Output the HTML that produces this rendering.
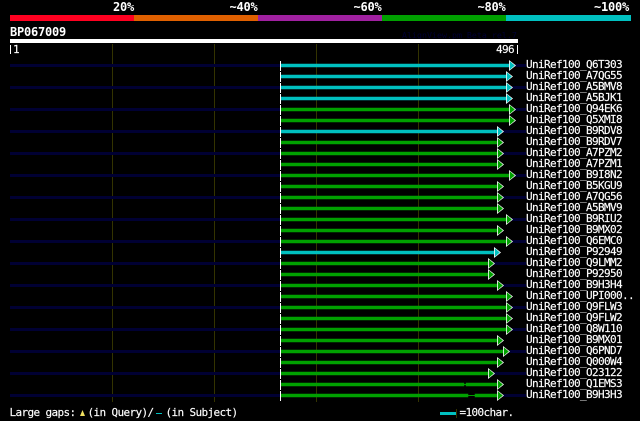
<!DOCTYPE html>
<html><head><meta charset="utf-8"><style>
html,body{margin:0;padding:0;background:#000;width:640px;height:421px;overflow:hidden}
svg{display:block}
text{font-family:"DejaVu Sans Mono","Liberation Mono",monospace;font-size:10px;fill:#fff}
.l{font-size:11px;letter-spacing:-.62px;stroke:#fff;stroke-width:.15px}
.b{font-size:12px;letter-spacing:-.22px;font-weight:bold}
.d{fill:#000033}.w{fill:#fff}
.c{fill:#00c0c0;stroke:#00c0c0;stroke-width:.5px}
.g{fill:#00a000;stroke:#00a000;stroke-width:.5px}
</style></head><body>
<svg width="640" height="421" viewBox="0 0 640 421" xmlns="http://www.w3.org/2000/svg">
<defs>
<g id="tc"><polygon points="0,-5 7,0.5 0,6" fill="#fff"/><polygon points="0.8,-3.8 5.8,0.5 0.8,4.8" fill="#00c0c0"/></g>
<g id="tg"><polygon points="0,-5 7,0.5 0,6" fill="#fff"/><polygon points="0.8,-3.8 5.8,0.5 0.8,4.8" fill="#00a000"/></g>
</defs>
<text class="b" x="113" y="11">20%</text>
<text class="b" x="229.5" y="11">~40%</text>
<text class="b" x="353.5" y="11">~60%</text>
<text class="b" x="477.5" y="11">~80%</text>
<text class="b" x="594" y="11">~100%</text>
<rect x="10" y="15" width="124" height="6" fill="#ff0020"/>
<rect x="134" y="15" width="124" height="6" fill="#e06000"/>
<rect x="258" y="15" width="124" height="6" fill="#a020a0"/>
<rect x="382" y="15" width="124" height="6" fill="#00a000"/>
<rect x="506" y="15" width="125" height="6" fill="#00c0c0"/>
<text class="b" x="10" y="36">BP067009</text>
<text x="402" y="38" style="font-size:8.3px;fill:#000033">AlignView.pm Beta rel.7</text>
<rect x="10" y="39" width="508" height="4" class="w"/>
<rect x="10" y="45" width="1" height="9" class="w"/>
<text class="l" x="13" y="53">1</text>
<text class="l" x="496" y="53">496</text>
<rect x="517" y="45" width="1" height="9" class="w"/>
<rect x="112" y="44" width="1" height="358" fill="#333300"/>
<rect x="214" y="44" width="1" height="358" fill="#333300"/>
<rect x="316" y="44" width="1" height="358" fill="#333300"/>
<rect x="418" y="44" width="1" height="358" fill="#333300"/>

<g transform="translate(0,65)"><rect x="10" y="-1" width="270" height="3" class="d"/><rect x="515" y="-1" width="11" height="3" class="d"/><rect x="281" y="-1" width="228" height="3" class="c"/><rect x="280" y="-4" width="1" height="10" class="w"/><use href="#tc" x="509"/><text class="l" x="526" y="3">UniRef100_Q6T303</text></g>
<g transform="translate(0,76)"><rect x="281" y="-1" width="225" height="3" class="c"/><rect x="280" y="-4" width="1" height="10" class="w"/><use href="#tc" x="506"/><text class="l" x="526" y="3">UniRef100_A7QG55</text></g>
<g transform="translate(0,87)"><rect x="10" y="-1" width="270" height="3" class="d"/><rect x="512" y="-1" width="14" height="3" class="d"/><rect x="281" y="-1" width="225" height="3" class="c"/><rect x="280" y="-4" width="1" height="10" class="w"/><use href="#tc" x="506"/><text class="l" x="526" y="3">UniRef100_A5BMV8</text></g>
<g transform="translate(0,98)"><rect x="281" y="-1" width="225" height="3" class="c"/><rect x="280" y="-4" width="1" height="10" class="w"/><use href="#tc" x="506"/><text class="l" x="526" y="3">UniRef100_A5BJK1</text></g>
<g transform="translate(0,109)"><rect x="10" y="-1" width="270" height="3" class="d"/><rect x="515" y="-1" width="11" height="3" class="d"/><rect x="281" y="-1" width="228" height="3" class="g"/><rect x="280" y="-4" width="1" height="10" class="w"/><use href="#tg" x="509"/><text class="l" x="526" y="3">UniRef100_Q94EK6</text></g>
<g transform="translate(0,120)"><rect x="281" y="-1" width="228" height="3" class="g"/><rect x="280" y="-4" width="1" height="10" class="w"/><use href="#tg" x="509"/><text class="l" x="526" y="3">UniRef100_Q5XMI8</text></g>
<g transform="translate(0,131)"><rect x="10" y="-1" width="270" height="3" class="d"/><rect x="503" y="-1" width="23" height="3" class="d"/><rect x="281" y="-1" width="216" height="3" class="c"/><rect x="280" y="-4" width="1" height="10" class="w"/><use href="#tc" x="497"/><text class="l" x="526" y="3">UniRef100_B9RDV8</text></g>
<g transform="translate(0,142)"><rect x="281" y="-1" width="216" height="3" class="g"/><rect x="280" y="-4" width="1" height="10" class="w"/><use href="#tg" x="497"/><text class="l" x="526" y="3">UniRef100_B9RDV7</text></g>
<g transform="translate(0,153)"><rect x="10" y="-1" width="270" height="3" class="d"/><rect x="503" y="-1" width="23" height="3" class="d"/><rect x="281" y="-1" width="216" height="3" class="g"/><rect x="280" y="-4" width="1" height="10" class="w"/><use href="#tg" x="497"/><text class="l" x="526" y="3">UniRef100_A7PZM2</text></g>
<g transform="translate(0,164)"><rect x="281" y="-1" width="216" height="3" class="g"/><rect x="280" y="-4" width="1" height="10" class="w"/><use href="#tg" x="497"/><text class="l" x="526" y="3">UniRef100_A7PZM1</text></g>
<g transform="translate(0,175)"><rect x="10" y="-1" width="270" height="3" class="d"/><rect x="515" y="-1" width="11" height="3" class="d"/><rect x="281" y="-1" width="228" height="3" class="g"/><rect x="280" y="-4" width="1" height="10" class="w"/><use href="#tg" x="509"/><text class="l" x="526" y="3">UniRef100_B9I8N2</text></g>
<g transform="translate(0,186)"><rect x="281" y="-1" width="216" height="3" class="g"/><rect x="280" y="-4" width="1" height="10" class="w"/><use href="#tg" x="497"/><text class="l" x="526" y="3">UniRef100_B5KGU9</text></g>
<g transform="translate(0,197)"><rect x="10" y="-1" width="270" height="3" class="d"/><rect x="503" y="-1" width="23" height="3" class="d"/><rect x="281" y="-1" width="216" height="3" class="g"/><rect x="280" y="-4" width="1" height="10" class="w"/><use href="#tg" x="497"/><text class="l" x="526" y="3">UniRef100_A7QG56</text></g>
<g transform="translate(0,208)"><rect x="281" y="-1" width="216" height="3" class="g"/><rect x="280" y="-4" width="1" height="10" class="w"/><use href="#tg" x="497"/><text class="l" x="526" y="3">UniRef100_A5BMV9</text></g>
<g transform="translate(0,219)"><rect x="10" y="-1" width="270" height="3" class="d"/><rect x="512" y="-1" width="14" height="3" class="d"/><rect x="281" y="-1" width="225" height="3" class="g"/><rect x="280" y="-4" width="1" height="10" class="w"/><use href="#tg" x="506"/><text class="l" x="526" y="3">UniRef100_B9RIU2</text></g>
<g transform="translate(0,230)"><rect x="281" y="-1" width="216" height="3" class="g"/><rect x="280" y="-4" width="1" height="10" class="w"/><use href="#tg" x="497"/><text class="l" x="526" y="3">UniRef100_B9MX02</text></g>
<g transform="translate(0,241)"><rect x="10" y="-1" width="270" height="3" class="d"/><rect x="512" y="-1" width="14" height="3" class="d"/><rect x="281" y="-1" width="225" height="3" class="g"/><rect x="280" y="-4" width="1" height="10" class="w"/><use href="#tg" x="506"/><text class="l" x="526" y="3">UniRef100_Q6EMC0</text></g>
<g transform="translate(0,252)"><rect x="281" y="-1" width="213" height="3" class="c"/><rect x="280" y="-4" width="1" height="10" class="w"/><use href="#tc" x="494"/><text class="l" x="526" y="3">UniRef100_P92949</text></g>
<g transform="translate(0,263)"><rect x="10" y="-1" width="270" height="3" class="d"/><rect x="494" y="-1" width="32" height="3" class="d"/><rect x="281" y="-1" width="207" height="3" class="g"/><rect x="280" y="-4" width="1" height="10" class="w"/><use href="#tg" x="488"/><text class="l" x="526" y="3">UniRef100_Q9LMM2</text></g>
<g transform="translate(0,274)"><rect x="281" y="-1" width="207" height="3" class="g"/><rect x="280" y="-4" width="1" height="10" class="w"/><use href="#tg" x="488"/><text class="l" x="526" y="3">UniRef100_P92950</text></g>
<g transform="translate(0,285)"><rect x="10" y="-1" width="270" height="3" class="d"/><rect x="503" y="-1" width="23" height="3" class="d"/><rect x="281" y="-1" width="216" height="3" class="g"/><rect x="280" y="-4" width="1" height="10" class="w"/><use href="#tg" x="497"/><text class="l" x="526" y="3">UniRef100_B9H3H4</text></g>
<g transform="translate(0,296)"><rect x="281" y="-1" width="225" height="3" class="g"/><rect x="280" y="-4" width="1" height="10" class="w"/><use href="#tg" x="506"/><text class="l" x="526" y="3">UniRef100_UPI000..</text></g>
<g transform="translate(0,307)"><rect x="10" y="-1" width="270" height="3" class="d"/><rect x="512" y="-1" width="14" height="3" class="d"/><rect x="281" y="-1" width="225" height="3" class="g"/><rect x="280" y="-4" width="1" height="10" class="w"/><use href="#tg" x="506"/><text class="l" x="526" y="3">UniRef100_Q9FLW3</text></g>
<g transform="translate(0,318)"><rect x="281" y="-1" width="225" height="3" class="g"/><rect x="280" y="-4" width="1" height="10" class="w"/><use href="#tg" x="506"/><text class="l" x="526" y="3">UniRef100_Q9FLW2</text></g>
<g transform="translate(0,329)"><rect x="10" y="-1" width="270" height="3" class="d"/><rect x="512" y="-1" width="14" height="3" class="d"/><rect x="281" y="-1" width="225" height="3" class="g"/><rect x="280" y="-4" width="1" height="10" class="w"/><use href="#tg" x="506"/><text class="l" x="526" y="3">UniRef100_Q8W110</text></g>
<g transform="translate(0,340)"><rect x="281" y="-1" width="216" height="3" class="g"/><rect x="280" y="-4" width="1" height="10" class="w"/><use href="#tg" x="497"/><text class="l" x="526" y="3">UniRef100_B9MX01</text></g>
<g transform="translate(0,351)"><rect x="10" y="-1" width="270" height="3" class="d"/><rect x="509" y="-1" width="17" height="3" class="d"/><rect x="281" y="-1" width="222" height="3" class="g"/><rect x="280" y="-4" width="1" height="10" class="w"/><use href="#tg" x="503"/><text class="l" x="526" y="3">UniRef100_Q6PND7</text></g>
<g transform="translate(0,362)"><rect x="281" y="-1" width="216" height="3" class="g"/><rect x="280" y="-4" width="1" height="10" class="w"/><use href="#tg" x="497"/><text class="l" x="526" y="3">UniRef100_Q000W4</text></g>
<g transform="translate(0,373)"><rect x="10" y="-1" width="270" height="3" class="d"/><rect x="494" y="-1" width="32" height="3" class="d"/><rect x="281" y="-1" width="207" height="3" class="g"/><rect x="280" y="-4" width="1" height="10" class="w"/><use href="#tg" x="488"/><text class="l" x="526" y="3">UniRef100_O23122</text></g>
<g transform="translate(0,384)"><rect x="281" y="-1" width="183" height="3" class="g"/><rect x="464" y="0" width="2" height="1" fill="#00a000"/><rect x="466" y="-1" width="31" height="3" class="g"/><rect x="280" y="-4" width="1" height="10" class="w"/><use href="#tg" x="497"/><text class="l" x="526" y="3">UniRef100_Q1EMS3</text></g>
<g transform="translate(0,395)"><rect x="10" y="-1" width="270" height="3" class="d"/><rect x="503" y="-1" width="23" height="3" class="d"/><rect x="281" y="-1" width="187" height="3" class="g"/><rect x="468" y="0" width="7" height="1" fill="#00a000"/><rect x="475" y="-1" width="22" height="3" class="g"/><rect x="280" y="-4" width="1" height="10" class="w"/><use href="#tg" x="497"/><text class="l" x="526" y="3">UniRef100_B9H3H3</text></g>

<text class="l" x="9.5" y="416">Large gaps:</text>
<path d="M82.5 410 L85 416 L80 416 Z" fill="#f0e060"/>
<text class="l" x="87.5" y="416">(in Query)/</text>
<rect x="156" y="413" width="6" height="1" fill="#00c0c0"/>
<text class="l" x="165.5" y="416">(in Subject)</text>
<rect x="440" y="412" width="16" height="3" fill="#00c0c0"/>
<rect x="456" y="409" width="1" height="9" fill="#333300"/>
<text class="l" x="459.5" y="416">=100char.</text>
</svg>
</body></html>
